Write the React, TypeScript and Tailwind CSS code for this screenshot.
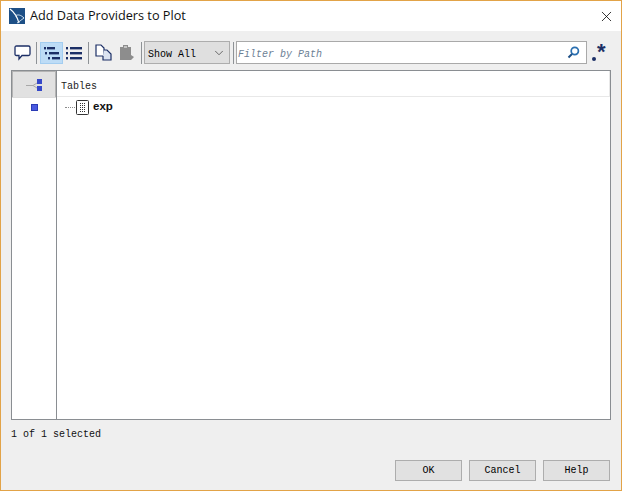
import { ChevronDown, X } from "lucide-react";

const mono = "font-['Liberation_Mono',monospace] text-[10px]";

function Sep({ className }: { className: string }) {
  return <div className={`h-[22px] w-px shrink-0 bg-[#8e9296] ${className}`} />;
}

function ListIcon({ indented }: { indented?: boolean }) {
  const rows = indented ? [0, 1, 4] : [0, 0, 0];
  const bars = indented ? [3, 5, 8] : [4, 4, 4];
  const widths = indented ? [8, 10, 8] : [12, 12, 12];
  return (
    <svg width="16" height="14" viewBox="0 0 16 14" fill="#1c2f66">
      {rows.map((x, i) => (
        <g key={i}>
          <rect x={x} y={1 + i * 5} width="2" height="2.4" />
          <rect x={bars[i]} y={1 + i * 5} width={widths[i]} height="2.4" />
        </g>
      ))}
    </svg>
  );
}

function Logo() {
  return (
    <svg width="16" height="16" viewBox="0 0 16 16" className="shrink-0">
      <rect width="16" height="16" fill="#1d4f86" />
      <path d="M1 1 C5 4 8 8 10 15" stroke="#fff" strokeWidth="1.2" fill="none" />
      <path d="M6 8 C9 6 12 7 15 10 C12 12 10 14 8 15" stroke="#cfe0ee" strokeWidth="1" fill="none" />
    </svg>
  );
}

function DialogButton({ label }: { label: string }) {
  return (
    <button type="button" className={`h-[21px] w-[67px] border border-[#adadad] bg-[#e1e1e1] text-black ${mono}`}>
      {label}
    </button>
  );
}

export default function App() {
  return (
    <div className="flex h-[491px] w-[622px] flex-col border border-[#e2a348] bg-[#efefef] text-black">
      <div className="flex h-[30px] shrink-0 items-center bg-white pl-2">
        <Logo />
        <span className="ml-[5px] font-['Open_Sans',sans-serif] text-[12.7px] text-[#111]">Add Data Providers to Plot</span>
        <X className="ml-auto mr-[6px] h-[17px] w-[17px] text-black" strokeWidth={1.1} />
      </div>

      <div className="mt-[10px] flex h-[23px] shrink-0 items-center">
        <svg width="17" height="16" viewBox="0 0 17 16" fill="none" className="ml-[13px] shrink-0">
          <path d="M2.5 1 H14.5 Q16 1 16 2.5 V9 Q16 10.5 14.5 10.5 H8 L5 14 V10.5 H2.5 Q1 10.5 1 9 V2.5 Q1 1 2.5 1 Z" fill="#fff" stroke="#1c2f66" strokeWidth="1.3" />
        </svg>
        <Sep className="ml-[5px]" />
        <div className="ml-[3px] flex h-[22px] w-[23px] shrink-0 items-center justify-center border border-[#a3cdf0] bg-[#bddcf6]">
          <ListIcon indented />
        </div>
        <div className="ml-[3px] shrink-0">
          <ListIcon />
        </div>
        <Sep className="ml-[6px]" />
        <svg width="17" height="17" viewBox="0 0 17 17" fill="none" className="ml-[6px] shrink-0">
          <path d="M1 1 H6 L9 4 V12 H1 Z" fill="#fff" stroke="#1c2f66" strokeWidth="1.2" />
          <path d="M9 6 H12 L16 10 V16 H8 V12" fill="#dbe3f1" stroke="#1c2f66" strokeWidth="1.2" />
        </svg>
        <svg width="16" height="17" viewBox="0 0 16 17" className="ml-[7px] shrink-0">
          <path d="M1 3 H4 V1 H9 V3 H12 V11 L15 13 L12 16 H1 Z" fill="#8d8d8d" />
          <rect x="5" y="2" width="3" height="2" fill="#c4c4c4" />
        </svg>
        <Sep className="ml-[6px]" />
        <div className={`ml-[2px] flex h-[23px] w-[86px] shrink-0 items-center justify-between border border-[#adadad] bg-[#dfdfdf] pl-[3px] pr-[3px] ${mono}`}>
          <span className="pt-[3px]">Show All</span>
          <ChevronDown className="h-[14px] w-[14px] text-[#444]" strokeWidth={1.3} />
        </div>
        <Sep className="ml-[3px]" />
        <div className="ml-[2px] flex h-[23px] w-[351px] shrink-0 items-center justify-between border border-[#a9a9a9] bg-white pl-[1px] pr-[6px]">
          <span className={`pt-[3px] italic text-[#6d7f95] ${mono}`}>Filter by Path</span>
          <svg width="13" height="13" viewBox="0 0 13 13" fill="none">
            <circle cx="7.8" cy="5" r="3.6" stroke="#2a6fb0" strokeWidth="1.7" />
            <path d="M5 8 L1.5 11.5" stroke="#1d4f86" strokeWidth="2" />
          </svg>
        </div>
        <div className="relative ml-[3px] h-[23px] w-[17px] shrink-0">
          <span className="absolute bottom-[3px] left-[2px] h-[4px] w-[4px] rounded-full bg-[#1c2f66]" />
          <span className="absolute left-[7px] top-[-2px] font-['Liberation_Sans',sans-serif] text-[22px] font-bold leading-[26px] text-[#1c2f66]">*</span>
        </div>
      </div>

      <div className="ml-[10px] mt-[6px] flex h-[350px] w-[600px] shrink-0 border border-[#8a8e92] bg-white">
        <div className="flex w-[45px] shrink-0 flex-col border-r border-[#8a8e92]">
          <div className="flex h-[26px] shrink-0 items-center justify-end border border-b-0 border-[#b4b4b4] bg-[#e1e1e1] pr-[12px]">
            <svg width="14" height="14" viewBox="0 0 14 14" className="overflow-visible">
              <path d="M-3 7.5 H4 L8 5 M4 7.5 L8 10" stroke="#a8a8a8" fill="none" />
              <rect x="8" y="1" width="5" height="5" fill="#3547c8" />
              <rect x="8" y="8" width="5" height="5" fill="#3547c8" />
            </svg>
          </div>
          <div className="flex h-[20px] items-center justify-center border-t border-[#dcdcdc] pl-[1px]">
            <div className="h-[7px] w-[7px] border border-[#2b3bb5] bg-[#4a5ae0]" />
          </div>
        </div>
        <div className="flex min-w-0 flex-1 flex-col">
          <div className={`flex h-[26px] shrink-0 items-center border-b border-r border-[#e8e8e8] pl-[4px] pt-[5px] text-[#222] ${mono}`}>
            Tables
          </div>
          <div className="flex h-[20px] items-center pl-[8px]">
            <div className="w-[10px] border-t border-dotted border-[#8a8a8a]" />
            <svg width="13" height="15" viewBox="0 0 13 15" className="ml-px shrink-0">
              <rect x="0.5" y="0.5" width="12" height="14" rx="1" fill="#fff" stroke="#333" />
              <path d="M4 3.5 H10 M4 5.5 H10 M4 7.5 H10 M4 9.5 H10 M4 11.5 H10" stroke="#333" strokeDasharray="1 1" fill="none" />
            </svg>
            <span className="ml-[4px] font-['Liberation_Sans',sans-serif] text-[11.5px] font-bold text-[#111]">exp</span>
          </div>
        </div>
      </div>

      <div className={`ml-[10px] mt-[9px] leading-[12px] text-[#111] ${mono}`}>1 of 1 selected</div>

      <div className="ml-[394px] mt-[19px] flex gap-[7px]">
        <DialogButton label="OK" />
        <DialogButton label="Cancel" />
        <DialogButton label="Help" />
      </div>
    </div>
  );
}
